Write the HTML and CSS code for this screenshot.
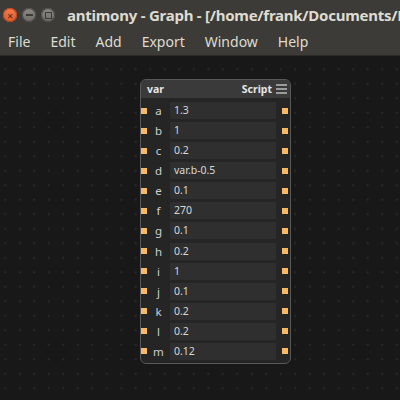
FILE: index.html
```html
<!DOCTYPE html>
<html>
<head>
  <title>antimony - Graph</title>
  <meta charset="UTF-8">
  <link rel="stylesheet" href="styles.css">
</head>
<body>
  <div class="titlebar">
    <div class="win-buttons">
      <span class="win-btn close">&#x2715;</span>
      <span class="win-btn min"></span>
      <span class="win-btn max"></span>
    </div>
    <div class="title">antimony - Graph - [/home/frank/Documents/Fractal.sb]</div>
  </div>
  <div class="menubar">
    <span class="menu-item">File</span>
    <span class="menu-item">Edit</span>
    <span class="menu-item">Add</span>
    <span class="menu-item">Export</span>
    <span class="menu-item">Window</span>
    <span class="menu-item">Help</span>
  </div>
  <div class="canvas">
    <div class="node">
      <div class="node-header">
        <span class="node-name">var</span>
        <span class="node-type">Script</span>
        <span class="node-menu"><i></i><i></i><i></i></span>
      </div>
      <div class="rows">
        <div class="row"><span class="port"></span><span class="label">a</span><span class="field">1.3</span><span class="port"></span></div>
        <div class="row"><span class="port"></span><span class="label">b</span><span class="field">1</span><span class="port"></span></div>
        <div class="row"><span class="port"></span><span class="label">c</span><span class="field">0.2</span><span class="port"></span></div>
        <div class="row"><span class="port"></span><span class="label">d</span><span class="field">var.b-0.5</span><span class="port"></span></div>
        <div class="row"><span class="port"></span><span class="label">e</span><span class="field">0.1</span><span class="port"></span></div>
        <div class="row"><span class="port"></span><span class="label">f</span><span class="field">270</span><span class="port"></span></div>
        <div class="row"><span class="port"></span><span class="label">g</span><span class="field">0.1</span><span class="port"></span></div>
        <div class="row"><span class="port"></span><span class="label">h</span><span class="field">0.2</span><span class="port"></span></div>
        <div class="row"><span class="port"></span><span class="label">i</span><span class="field">1</span><span class="port"></span></div>
        <div class="row"><span class="port"></span><span class="label">j</span><span class="field">0.1</span><span class="port"></span></div>
        <div class="row"><span class="port"></span><span class="label">k</span><span class="field">0.2</span><span class="port"></span></div>
        <div class="row"><span class="port"></span><span class="label">l</span><span class="field">0.2</span><span class="port"></span></div>
        <div class="row"><span class="port"></span><span class="label">m</span><span class="field">0.12</span><span class="port"></span></div>
      </div>
    </div>
  </div>
</body>
</html>
```

FILE: styles.css
```css
body {
  margin: 0;
  padding: 0;
  width: 400px;
  height: 400px;
  overflow: hidden;
  background-color: #1a1a1a;
  font-family: "Noto Sans", "DejaVu Sans", sans-serif;
}

.titlebar {
  display: flex;
  align-items: center;
  height: 30px;
  background-color: #3c3b37;
  white-space: nowrap;
  overflow: hidden;
}

.win-buttons {
  display: flex;
  gap: 5px;
  padding-left: 3px;
}

.win-btn {
  display: flex;
  align-items: center;
  justify-content: center;
  width: 14px;
  height: 14px;
  border-radius: 50%;
  background: linear-gradient(#8a8984, #6d6c68);
  box-shadow: inset 0 0 0 1px #4a4945;
  color: #3c3b37;
  font-size: 8px;
  font-weight: bold;
}

.win-btn.close {
  background: linear-gradient(#f47c4f, #e05a2a);
  box-shadow: inset 0 0 0 1px #b8461f;
  color: #40302a;
}

.win-btn.min::after {
  content: "";
  width: 7px;
  height: 1.5px;
  background-color: #3c3b37;
}

.win-btn.max::after {
  content: "";
  width: 5px;
  height: 5px;
  border: 1.5px solid #3c3b37;
}

.title {
  margin-left: 12px;
  color: #dfdbd2;
  font-size: 15px;
  font-weight: bold;
  letter-spacing: -0.25px;
}

.menubar {
  display: flex;
  align-items: center;
  height: 25px;
  padding-left: 8px;
  gap: 20px;
  background-color: #3c3b37;
  border-bottom: 1px solid #2b2a27;
}

.menu-item {
  color: #dfdbd2;
  font-size: 14px;
  line-height: 20px;
  padding-bottom: 2px;
}

.canvas {
  position: relative;
  height: 344px;
  background-color: #181818;
  background-image: radial-gradient(circle, #2c2c2c 0.9px, transparent 1.1px);
  background-size: 14.5px 14.5px;
  background-position: -2px 6px;
}

.node {
  position: absolute;
  left: 140px;
  top: 23px;
  width: 149px;
  border: 1px solid #585858;
  border-radius: 6px;
  background-color: #252525;
  overflow: hidden;
}

.node-header {
  display: flex;
  align-items: center;
  height: 18px;
  padding: 0 3px 0 6px;
  background-color: #3a3a3a;
  color: #e6e6e6;
  font-size: 10.5px;
  font-weight: bold;
}

.node-name {
  flex: 1;
}

.node-type {
  margin-right: 4px;
}

.node-menu {
  display: flex;
  flex-direction: column;
  gap: 2px;
  width: 11px;
}

.node-menu i {
  height: 2px;
  background-color: #9a9a9a;
}

.rows {
  display: flex;
  flex-direction: column;
  gap: 3.08px;
  padding: 4px 0 3px;
}

.row {
  display: flex;
  align-items: center;
  height: 17px;
}

.port {
  width: 6px;
  height: 6px;
  background-color: #f7b964;
}

.label {
  width: 23px;
  text-align: center;
  color: #cfcfcf;
  font-size: 11.5px;
}

.field {
  width: 102px;
  height: 17px;
  margin-right: 6px;
  padding-left: 4px;
  line-height: 17px;
  background-color: #2f2f2f;
  color: #d8d8d8;
  font-size: 10.5px;
}
```
